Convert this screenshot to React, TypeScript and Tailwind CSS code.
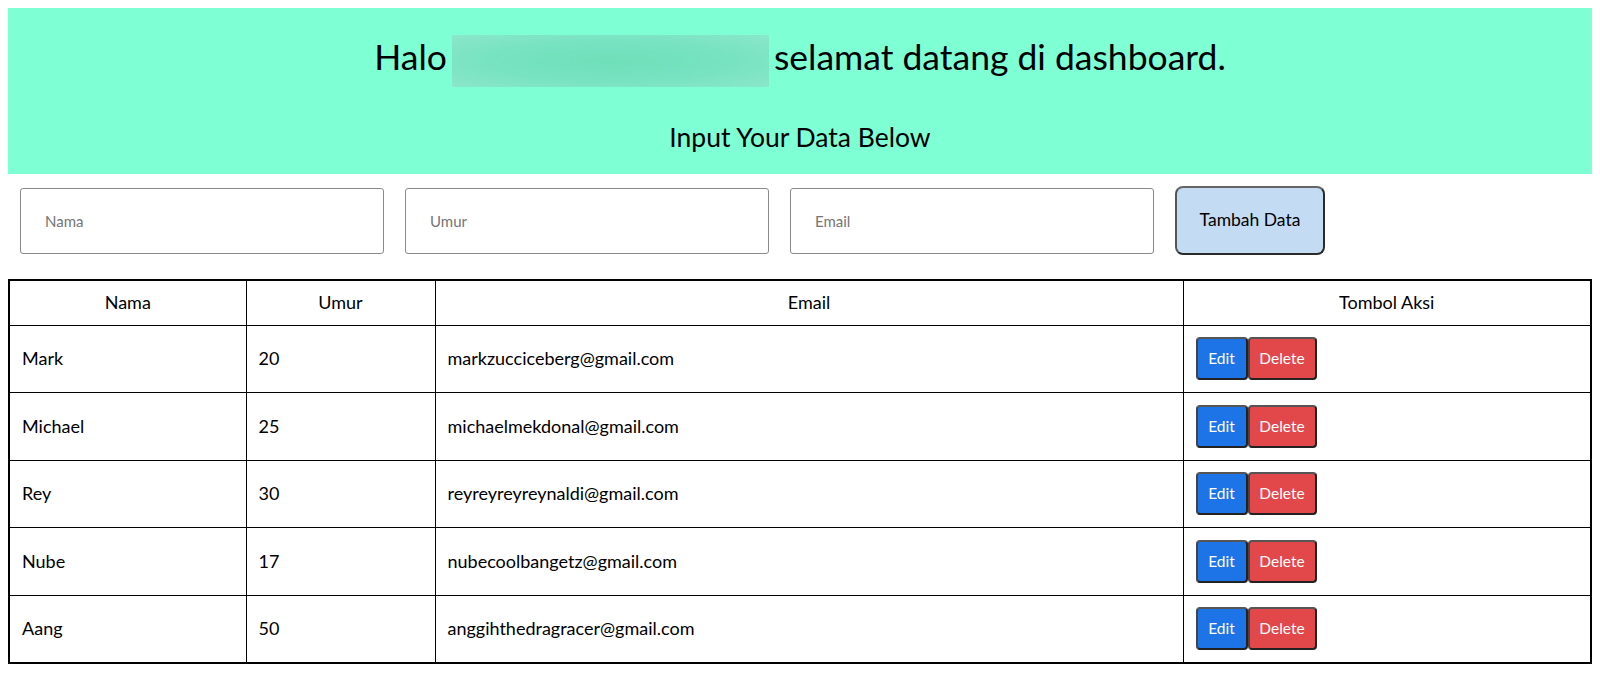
import React from "react";

const rows = [
  { nama: "Mark", umur: "20", email: "markzucciceberg@gmail.com" },
  { nama: "Michael", umur: "25", email: "michaelmekdonal@gmail.com" },
  { nama: "Rey", umur: "30", email: "reyreyreyreynaldi@gmail.com" },
  { nama: "Nube", umur: "17", email: "nubecoolbangetz@gmail.com" },
  { nama: "Aang", umur: "50", email: "anggihthedragracer@gmail.com" },
];

export default function App() {
  return (
    <div className="min-h-[683px] bg-white p-2 text-black" style={{ fontFamily: "Lato, 'Open Sans', sans-serif" }}>
      <div className="flex h-[166px] flex-col items-center bg-[#7fffd4]">
        <h1 className="mt-[29px] flex h-[40px] items-center whitespace-nowrap text-[35.5px] leading-[40px]">
          <span>Halo</span>
          <span className="mx-[5px] mt-[8px] inline-block h-[52px] w-[317px] bg-[radial-gradient(ellipse_at_center,#6fdfb9_0%,#78e3c1_55%,#8ae7c9_100%)]"></span>
          <span>selamat datang di dashboard.</span>
        </h1>
        <h2 className="mt-[45px] text-[26.5px] leading-[31px]">Input Your Data Below</h2>
      </div>

      <div className="mt-[12px] flex items-center gap-[21px] px-3">
        <input
          placeholder="Nama"
          className="h-[66px] w-[364px] rounded-[3px] border border-[#8a8a8a] px-6 text-[15px] placeholder:text-[#757575] outline-none"
        />
        <input
          placeholder="Umur"
          className="h-[66px] w-[364px] rounded-[3px] border border-[#8a8a8a] px-6 text-[15px] placeholder:text-[#757575] outline-none"
        />
        <input
          placeholder="Email"
          className="h-[66px] w-[364px] rounded-[3px] border border-[#8a8a8a] px-6 text-[15px] placeholder:text-[#757575] outline-none"
        />
        <button className="h-[69px] w-[150px] rounded-[8px] border-2 border-[#2a2a2a] border-t-[#666] border-l-[#555] bg-[#c3dcf3] text-[17.5px] text-black">
          Tambah Data
        </button>
      </div>

      <table className="mt-[24px] w-full border-collapse border-2 border-black text-[18px]">
        <thead>
          <tr className="h-[45px]">
            <th className="w-[237px] border border-black font-normal">Nama</th>
            <th className="w-[189px] border border-black font-normal">Umur</th>
            <th className="w-[748px] border border-black font-normal">Email</th>
            <th className="border border-black font-normal">Tombol Aksi</th>
          </tr>
        </thead>
        <tbody>
          {rows.map((r) => (
            <tr key={r.nama} className="h-[67.5px]">
              <td className="border border-black px-3">{r.nama}</td>
              <td className="border border-black px-3">{r.umur}</td>
              <td className="border border-black px-3">{r.email}</td>
              <td className="border border-black px-3">
                <div className="flex">
                  <button className="h-[43px] w-[52px] rounded-[4px] border-2 border-[#222] border-t-[#555] border-l-[#444] bg-[#1d74e7] text-[15.5px] text-white">
                    Edit
                  </button>
                  <button className="h-[43px] w-[69px] rounded-[4px] border-2 border-[#222] border-t-[#555] border-l-[#444] bg-[#e2474a] text-[15.5px] text-white">
                    Delete
                  </button>
                </div>
              </td>
            </tr>
          ))}
        </tbody>
      </table>
    </div>
  );
}
